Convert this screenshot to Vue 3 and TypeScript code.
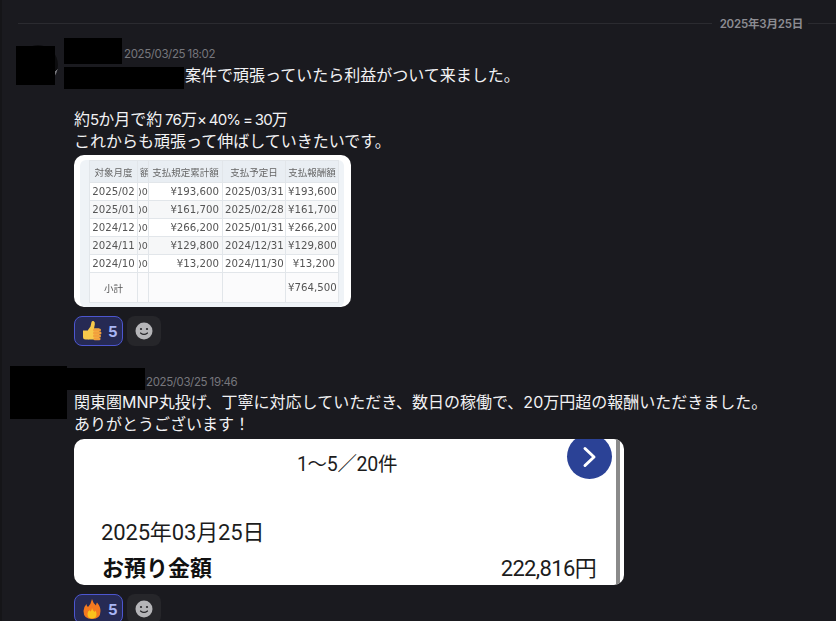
<template>
  <div class="chat">
    <div class="date-divider">
      <span class="line"></span>
      <span class="date-label">2025年3月25日</span>
      <span class="line tail"></span>
    </div>

    <div class="message first">
      <div class="avatar-ring"></div>
      <div class="redact" style="left: 16px; top: 2px; width: 39px; height: 39px"></div>
      <div class="redact" style="left: 64px; top: -6px; width: 58px; height: 26px"></div>
      <div class="redact" style="left: 64px; top: 23px; width: 120px; height: 22px"></div>
      <div class="meta"><span class="time">2025/03/25 18:02</span></div>
      <div class="body">
        <p><span class="lead"></span>案件で頑張っていたら利益がついて来ました。</p>
        <p>&nbsp;</p>
        <p>約<span class="tight">5</span>か月で約<span class="tight"> 76</span>万<span class="tight">× 40% = 30</span>万</p>
        <p>これからも頑張って伸ばしていきたいです。</p>
      </div>
      <div class="attach table-shot">
        <div class="table-panel">
          <table>
            <thead>
              <tr>
                <th class="c1">対象月度</th>
                <th class="c2">額</th>
                <th class="c3">支払規定累計額</th>
                <th class="c4">支払予定日</th>
                <th class="c5">支払報酬額</th>
              </tr>
            </thead>
            <tbody>
              <tr v-for="row in rows" :key="row.month">
                <td class="month">{{ row.month }}</td>
                <td class="cut">)0</td>
                <td class="num">{{ row.total }}</td>
                <td class="due">{{ row.due }}</td>
                <td class="num">{{ row.total }}</td>
              </tr>
              <tr class="subtotal">
                <td class="sub-label">小計</td>
                <td></td>
                <td></td>
                <td></td>
                <td class="num">¥764,500</td>
              </tr>
            </tbody>
          </table>
        </div>
      </div>
      <div class="reactions">
        <button class="pill">
          <svg width="22" height="22" viewBox="0 0 22 22">
            <path d="M2 10.500h5.500v9H4.500Q2 19.500 2 17z" fill="#f7c94b" />
            <path d="M7 10l2.500-3.500 1-4.500q.5-1.500 2-1 1.800.7 1.300 3.500L13 8.500h5v11H7z" fill="#f7c94b" />
            <rect x="12" y="8.500" width="8" height="3" rx="1.500" fill="#f2a03d" />
            <rect x="12" y="11.500" width="8.500" height="3" rx="1.500" fill="#f2a03d" />
            <rect x="12" y="14.500" width="8" height="3" rx="1.500" fill="#f2a03d" />
            <rect x="12.500" y="17.500" width="7" height="2.700" rx="1.300" fill="#f2a03d" />
          </svg>
          <span>5</span>
        </button>
        <button class="add">
          <svg width="18" height="18" viewBox="0 0 18 18">
            <circle cx="9" cy="9" r="8.500" fill="#b5b5b8" />
            <circle cx="6" cy="7" r="1.100" fill="#26262a" />
            <circle cx="12" cy="7" r="1.100" fill="#26262a" />
            <path d="M5.500 11q3.500 2.800 7 0" fill="none" stroke="#26262a" stroke-width="1.200" stroke-linecap="round" />
          </svg>
        </button>
      </div>
    </div>

    <div class="message second">
      <div class="redact" style="left: 10px; top: -6px; width: 57px; height: 53px"></div>
      <div class="redact" style="left: 67px; top: -4px; width: 78px; height: 22px"></div>
      <div class="meta wide"><span class="time">2025/03/25 19:46</span></div>
      <div class="body">
        <p>関東圏MNP丸投げ、丁寧に対応していただき、数日の稼働で、20万円超の報酬いただきました。</p>
        <p>ありがとうございます！</p>
      </div>
      <div class="attach bank-shot">
        <div class="pager">1〜5／20件</div>
        <div class="next">
          <svg width="18" height="24" viewBox="0 0 18 24">
            <path d="M4 3.500l9 8.500-9 8.500" fill="none" stroke="#fff" stroke-width="3" stroke-linecap="round" stroke-linejoin="round" />
          </svg>
        </div>
        <div class="scrollbar"></div>
        <div class="bank-date">2025年03月25日</div>
        <div class="bank-row">
          <strong>お預り金額</strong>
          <span>222,816円</span>
        </div>
      </div>
      <div class="reactions">
        <button class="pill">
          <svg width="22" height="22" viewBox="0 0 22 22">
            <path d="M11 1q1 4 4 6.500 0-1.500 1-3 3.500 4 3.500 8.500 0 8-8.500 8T2.500 13q0-4 3-7 0 2 1.500 3Q10 6 11 1z" fill="#f4791f" />
            <path d="M11 10q.5 2.500 2.500 4 .5-.8.8-1.500 1.200 1.500 1.200 3.500 0 4.500-4.500 4.500T6.500 16q0-2.500 2-4 .3 1 1 1.500Q11 12 11 10z" fill="#fcc21b" />
          </svg>
          <span>5</span>
        </button>
        <button class="add">
          <svg width="18" height="18" viewBox="0 0 18 18">
            <circle cx="9" cy="9" r="8.500" fill="#b5b5b8" />
            <circle cx="6" cy="7" r="1.100" fill="#26262a" />
            <circle cx="12" cy="7" r="1.100" fill="#26262a" />
            <path d="M5.500 11q3.500 2.800 7 0" fill="none" stroke="#26262a" stroke-width="1.200" stroke-linecap="round" />
          </svg>
        </button>
      </div>
    </div>
  </div>
</template>

<script setup lang="ts">
interface PayRow {
  month: string;
  total: string;
  due: string;
}

const rows: PayRow[] = [
  { month: '2025/02', total: '¥193,600', due: '2025/03/31' },
  { month: '2025/01', total: '¥161,700', due: '2025/02/28' },
  { month: '2024/12', total: '¥266,200', due: '2025/01/31' },
  { month: '2024/11', total: '¥129,800', due: '2024/12/31' },
  { month: '2024/10', total: '¥13,200', due: '2024/11/30' }
];
</script>

<style>
html,
body {
  background: #1a1a1f;
}
</style>

<style scoped>
.chat {
  height: 621px;
  overflow: hidden;
  box-sizing: border-box;
  border-left: 2px solid #151518;
  padding-top: 14px;
  background: #1a1a1f;
  color: #f2f2f4;
  font-family: Inter, "Noto Sans CJK JP", sans-serif;
  font-size: 16px;
}

.date-divider {
  display: flex;
  align-items: center;
  height: 18px;
  padding-left: 16px;
}

.line {
  flex: 1;
  height: 1px;
  background: #2b2b30;
}

.line.tail {
  flex: 0 0 28px;
}

.date-label {
  margin: 0 5px 0 8px;
  font-size: 11.500px;
  font-weight: 600;
  letter-spacing: -0.2px;
  color: #8c8c92;
}

.message {
  position: relative;
  margin-left: -2px;
  padding-left: 74px;
}

.message.first {
  margin-top: 12px;
}

.message.second {
  margin-top: 26px;
}

.redact {
  position: absolute;
  background: #000;
}

.avatar-ring {
  position: absolute;
  left: 18px;
  top: 1px;
  width: 40px;
  height: 40px;
  border-radius: 50%;
  background: linear-gradient(135deg, #0c0c0e 80%, #77777c 80%);
}

.meta {
  display: flex;
  align-items: center;
  height: 20px;
  padding-left: 50px;
}

.meta.wide {
  height: 19px;
  padding-left: 72px;
}

.time {
  font-size: 11.500px;
  letter-spacing: -0.38px;
  word-spacing: -0.4px;
  color: #76767c;
}

.body p {
  margin: 0;
  line-height: 22px;
  white-space: nowrap;
}

.tight {
  font-size: 15px;
  line-height: 1;
  letter-spacing: -0.85px;
  word-spacing: -0.6px;
}

.lead {
  display: inline-block;
  width: 111px;
}

.attach {
  position: relative;
  overflow: hidden;
  margin-top: 3px;
  border-radius: 10px;
  background: #fff;
}

.table-shot {
  width: 277px;
  height: 152px;
}

.table-panel {
  box-sizing: border-box;
  height: 147px;
  margin: 5px 7px 0 6px;
  padding-left: 9px;
  border-radius: 6px;
  background: #eff3f7;
}

table {
  width: 250px;
  table-layout: fixed;
  border-collapse: collapse;
  font-family: "DejaVu Sans", sans-serif;
  font-size: 10.200px;
  color: #555;
  filter: blur(0.45px);
}

th,
td {
  overflow: hidden;
  padding: 0 2px;
  border: 1px solid #e2e6ea;
  white-space: nowrap;
}

th {
  height: 21px;
  font-size: 9.500px;
  font-weight: 400;
  font-family: "Noto Sans CJK JP", sans-serif;
  background: #e9eef3;
  color: #666;
}

td {
  height: 17px;
  background: #fff;
}

tbody tr:nth-child(even) td {
  background: #f6f7f8;
}

.subtotal td {
  height: 29px;
  background: #fbfbfc !important;
}

.c1 { width: 43px; }
.c2 { width: 6px; }
.c3 { width: 69px; }
.c4 { width: 58px; }

.month,
.due {
  text-align: center;
}

.cut {
  padding: 0 1px 0 0;
  font-size: 9.500px;
  text-align: right;
}

.num {
  text-align: right;
  padding-right: 3px;
}

.sub-label {
  text-align: center;
  font-size: 9.500px;
  font-family: "Noto Sans CJK JP", sans-serif;
}

.reactions {
  display: flex;
  gap: 4px;
  margin-top: 9px;
}

.pill,
.add {
  display: flex;
  align-items: center;
  height: 30px;
  padding: 0;
  border-radius: 8px;
  font-family: inherit;
}

.pill {
  box-sizing: border-box;
  gap: 5px;
  width: 49px;
  padding-left: 6px;
  border: 1px solid #4c56cf;
  background: #262a54;
  color: #a9b6f5;
  font-size: 15px;
  font-weight: 700;
}

.add {
  justify-content: center;
  width: 34px;
  border: none;
  background: #26262a;
}

.bank-shot {
  width: 550px;
  height: 146px;
  margin-top: 4px;
  color: #1c1c1c;
  font-family: Roboto, "Noto Sans CJK JP", sans-serif;
  font-size: 22px;
}

.pager {
  padding-top: 12px;
  padding-right: 4px;
  font-size: 19.500px;
  letter-spacing: -0.3px;
  line-height: 28px;
  text-align: center;
}

.next {
  position: absolute;
  top: -5px;
  left: 493px;
  display: flex;
  align-items: center;
  justify-content: center;
  width: 45px;
  height: 45px;
  border-radius: 50%;
  background: #2b4296;
}

.scrollbar {
  position: absolute;
  top: 0;
  bottom: 0;
  left: 542px;
  width: 4px;
  background: #8a8a8a;
}

.bank-date {
  margin-top: 39px;
  padding-left: 27px;
  letter-spacing: -0.15px;
  line-height: 30px;
}

.bank-row {
  display: flex;
  justify-content: space-between;
  align-items: center;
  margin-top: 6px;
  padding: 0 28px;
  line-height: 30px;
}

.bank-row span {
  letter-spacing: -0.65px;
}

.bank-row strong {
  font-weight: 700;
  color: #111;
}
</style>
